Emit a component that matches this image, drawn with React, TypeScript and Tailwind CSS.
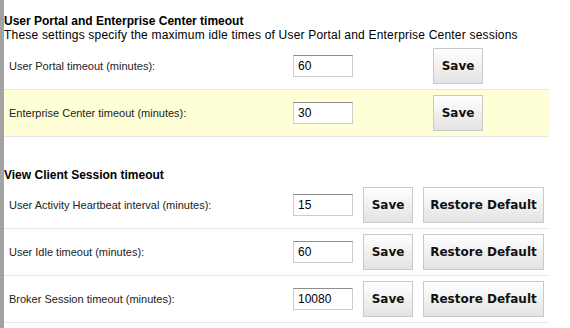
import React from 'react'

interface Setting {
  label: string
  value: string
  highlight?: boolean
}

const portalSettings: Setting[] = [
  { label: 'User Portal timeout (minutes):', value: '60' },
  { label: 'Enterprise Center timeout (minutes):', value: '30', highlight: true },
]

const clientSettings: Setting[] = [
  { label: 'User Activity Heartbeat interval (minutes):', value: '15' },
  { label: 'User Idle timeout (minutes):', value: '60' },
  { label: 'Broker Session timeout (minutes):', value: '10080' },
]

function Button({ children, className = '' }: { children: React.ReactNode; className?: string }) {
  return (
    <button
      className={`h-[36px] border border-[#c9c9c9] bg-gradient-to-b from-white to-[#e3e3e3] text-[12px] font-bold text-[#111] font-['DejaVu_Sans',sans-serif] ${className}`}
    >
      {children}
    </button>
  )
}

function Row({ setting, restore }: { setting: Setting; restore?: boolean }) {
  return (
    <div
      className={`flex h-[47px] items-center border-b border-[#e6e6e6] ${setting.highlight ? 'bg-[#ffffd7]' : ''}`}
    >
      <span className="w-[289px] pl-[5px] text-[11px] text-[#222]">{setting.label}</span>
      <input
        readOnly
        value={setting.value}
        className="h-[22px] w-[60px] border border-[#cdcdcd] border-t-[#8c8c8c] bg-white pl-[4px] text-[12px] text-black outline-none font-['Liberation_Sans',sans-serif]"
      />
      {restore ? (
        <>
          <Button className="ml-[10px] w-[50px]">Save</Button>
          <Button className="ml-[10px] w-[121px]">Restore Default</Button>
        </>
      ) : (
        <Button className="ml-[80px] w-[50px]">Save</Button>
      )}
    </div>
  )
}

export default function App() {
  return (
    <div className="flex h-[328px] w-[570px] overflow-hidden bg-white font-['Liberation_Sans',Arial,sans-serif]">
      <div className="w-[4px] shrink-0 bg-[#a3a3a3]" />
      <div className="flex flex-col pt-[14px]">
        <div className="text-[12px] font-bold leading-[14px] text-black">User Portal and Enterprise Center timeout</div>
        <div className="whitespace-nowrap text-[12px] leading-[14px] tracking-[0.2px] text-black">
          These settings specify the maximum idle times of User Portal and Enterprise Center sessions
        </div>
        <div className="mt-px w-[545px]">
          {portalSettings.map((s) => (
            <Row key={s.label} setting={s} />
          ))}
        </div>
        <div className="mt-[31px] text-[12px] font-bold leading-[14px] text-black">View Client Session timeout</div>
        <div className="w-[545px]">
          {clientSettings.map((s) => (
            <Row key={s.label} setting={s} restore />
          ))}
        </div>
      </div>
    </div>
  )
}
